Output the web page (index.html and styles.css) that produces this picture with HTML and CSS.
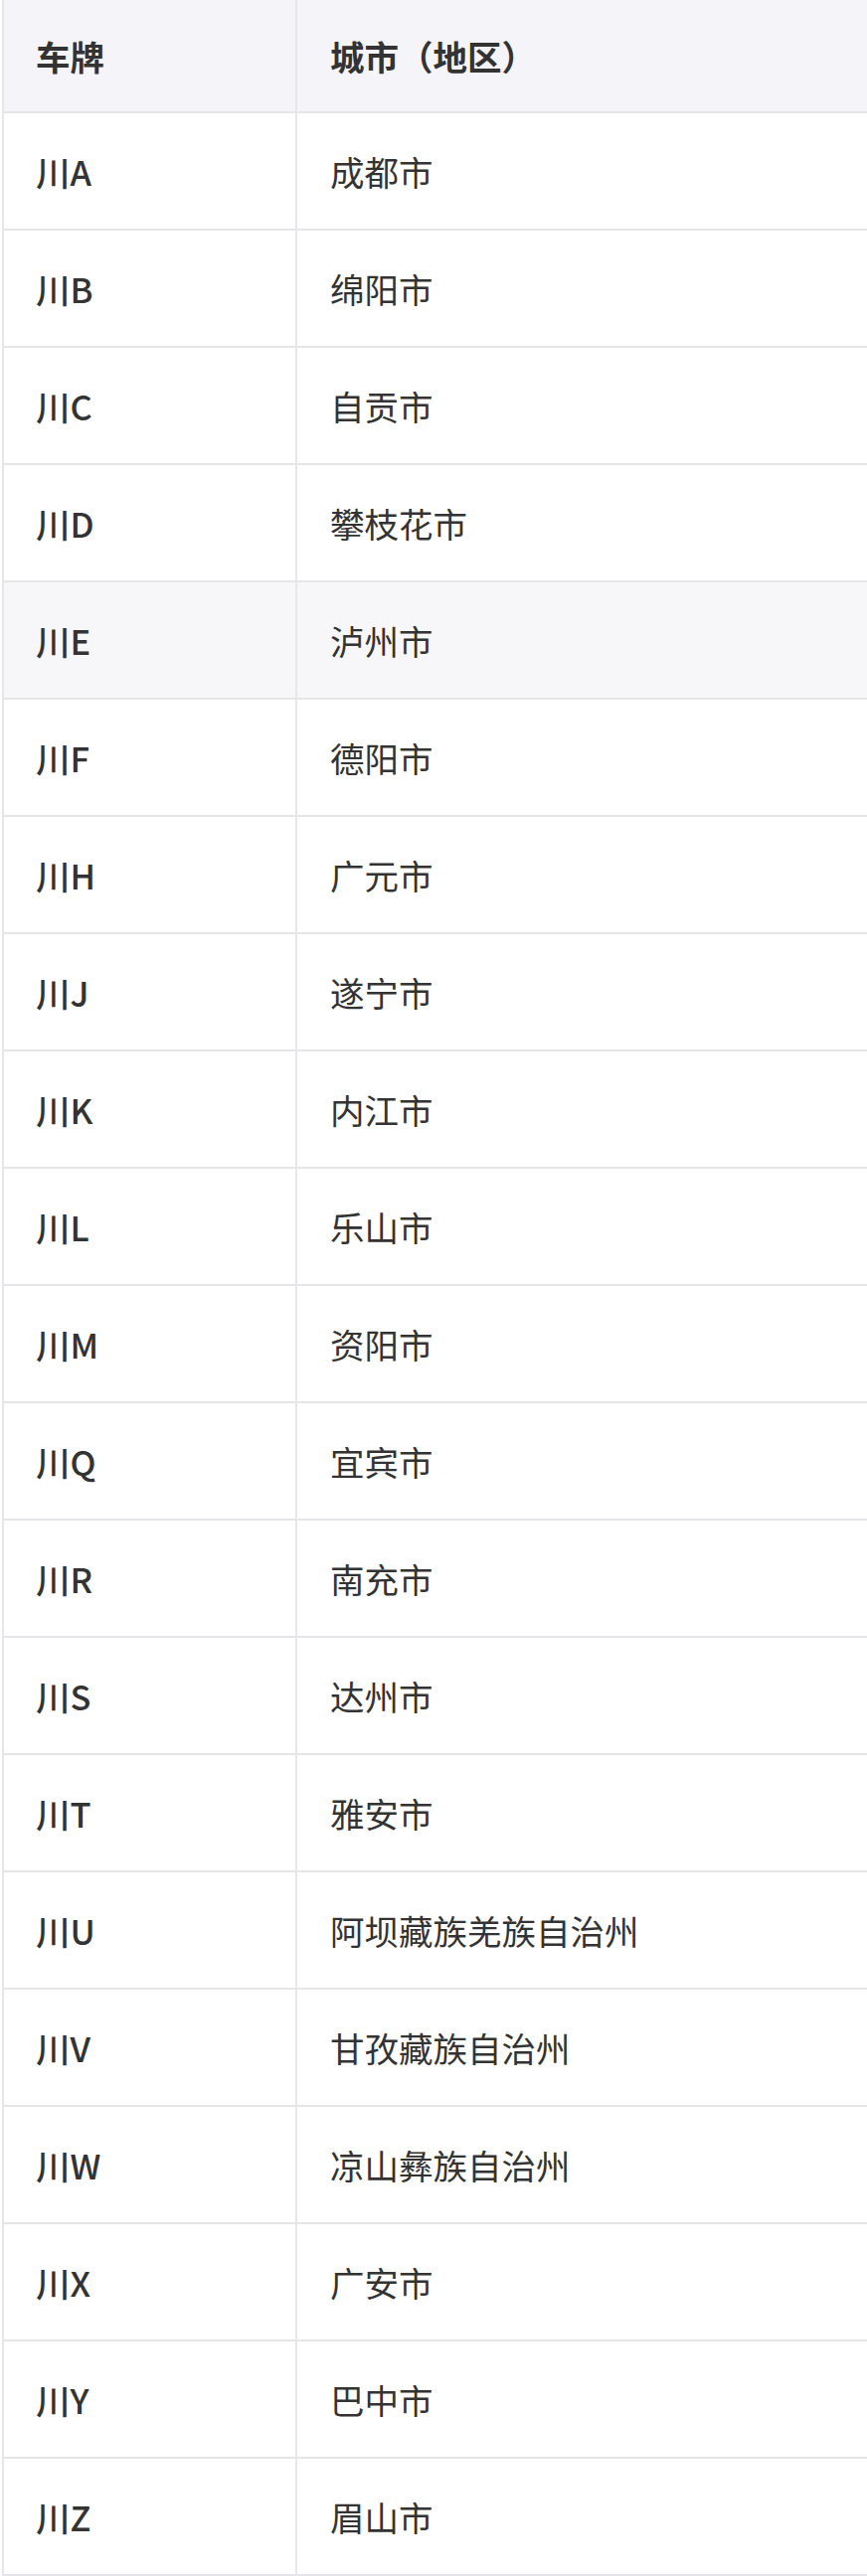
FILE: index.html
```html
<!DOCTYPE html>
<html lang="zh-CN">
<head>
<meta charset="utf-8">
<title>四川车牌</title>
<link rel="stylesheet" href="styles.css">
</head>
<body>
<div class="table">
  <div class="row head"><div class="cell c1">车牌</div><div class="cell c2">城市（地区）</div></div>
  <div class="row"><div class="cell c1">川A</div><div class="cell c2">成都市</div></div>
  <div class="row"><div class="cell c1">川B</div><div class="cell c2">绵阳市</div></div>
  <div class="row"><div class="cell c1">川C</div><div class="cell c2">自贡市</div></div>
  <div class="row"><div class="cell c1">川D</div><div class="cell c2">攀枝花市</div></div>
  <div class="row shade"><div class="cell c1">川E</div><div class="cell c2">泸州市</div></div>
  <div class="row"><div class="cell c1">川F</div><div class="cell c2">德阳市</div></div>
  <div class="row"><div class="cell c1">川H</div><div class="cell c2">广元市</div></div>
  <div class="row"><div class="cell c1">川J</div><div class="cell c2">遂宁市</div></div>
  <div class="row"><div class="cell c1">川K</div><div class="cell c2">内江市</div></div>
  <div class="row"><div class="cell c1">川L</div><div class="cell c2">乐山市</div></div>
  <div class="row"><div class="cell c1">川M</div><div class="cell c2">资阳市</div></div>
  <div class="row"><div class="cell c1">川Q</div><div class="cell c2">宜宾市</div></div>
  <div class="row"><div class="cell c1">川R</div><div class="cell c2">南充市</div></div>
  <div class="row"><div class="cell c1">川S</div><div class="cell c2">达州市</div></div>
  <div class="row"><div class="cell c1">川T</div><div class="cell c2">雅安市</div></div>
  <div class="row"><div class="cell c1">川U</div><div class="cell c2">阿坝藏族羌族自治州</div></div>
  <div class="row"><div class="cell c1">川V</div><div class="cell c2">甘孜藏族自治州</div></div>
  <div class="row"><div class="cell c1">川W</div><div class="cell c2">凉山彝族自治州</div></div>
  <div class="row"><div class="cell c1">川X</div><div class="cell c2">广安市</div></div>
  <div class="row"><div class="cell c1">川Y</div><div class="cell c2">巴中市</div></div>
  <div class="row"><div class="cell c1">川Z</div><div class="cell c2">眉山市</div></div>
</div>
</body>
</html>
```

FILE: styles.css
```css
html, body {
  margin: 0;
  padding: 0;
  background: #ffffff;
}
body {
  font-family: "Noto Sans CJK SC", "Noto Sans", sans-serif;
  color: #333333;
  font-size: 34.5px;
}
.table {
  margin-left: 2px;
  border-left: 2px solid #e6e6ea;
}
.row {
  display: grid;
  grid-template-columns: 295px 1fr;
  height: 118px;
  box-sizing: border-box;
  border-bottom: 2px solid #e6e6ea;
}
.row.head {
  height: 114px;
  background: #f5f5f9;
}
.row.shade {
  background: #f7f7f9;
}
.cell {
  display: flex;
  align-items: center;
  padding-left: 32px;
  line-height: 1;
}
.c1 {
  border-right: 2px solid #e6e6ea;
  font-weight: 500;
}
.c2 {
  font-weight: 400;
  padding-left: 33px;
}
.head .cell {
  font-weight: 700;
}
```
